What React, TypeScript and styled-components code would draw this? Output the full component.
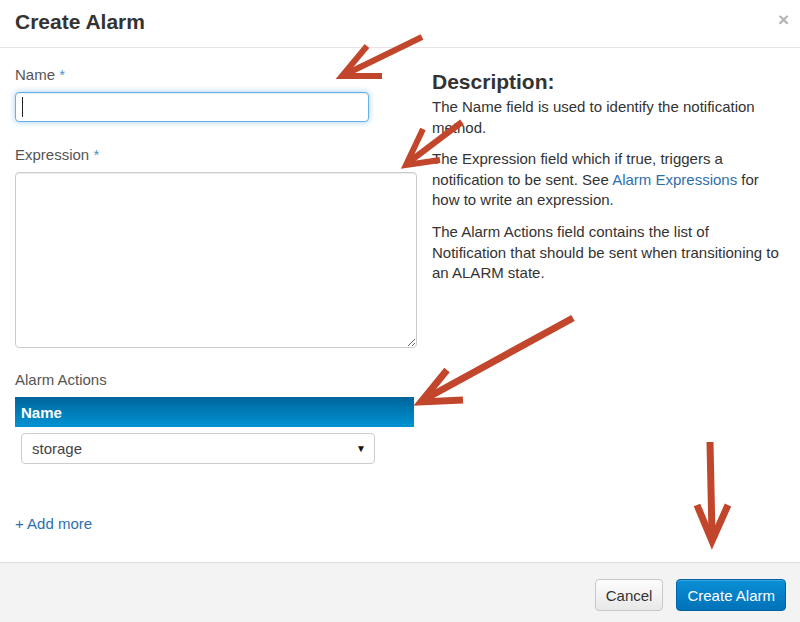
import React from "react";
import styled, { createGlobalStyle } from "styled-components";

const Global = createGlobalStyle`
  html, body { margin: 0; padding: 0; background: #fff; }
  body { font-family: "Liberation Sans", Arial, Helvetica, sans-serif; color: #333; }
  * { box-sizing: border-box; }
`;

const Modal = styled.div`
  position: relative;
  width: 800px;
  height: 622px;
  display: flex;
  flex-direction: column;
  background: #fff;
  overflow: hidden;
`;

const Header = styled.div`
  height: 48px;
  border-bottom: 1px solid #e5e5e5;
  display: flex;
  align-items: center;
  justify-content: space-between;
  padding: 0 15px 4px 15px;
`;

const Title = styled.h3`
  margin: 0;
  font-size: 21px;
  font-weight: bold;
  color: #333;
`;

const Close = styled.span`
  font-size: 19px;
  font-weight: bold;
  color: #b5b5b5;
  line-height: 1;
  margin-right: -4px;
  margin-top: -4px;
`;

const Body = styled.div`
  flex: 1;
  display: grid;
  grid-template-columns: 402px 1fr;
  column-gap: 15px;
  padding: 17px 15px 0 15px;
`;

const LeftCol = styled.div`
  display: flex;
  flex-direction: column;
`;

const Label = styled.label<{ $mt?: number }>`
  display: block;
  font-size: 15px;
  line-height: 20px;
  color: #555;
  margin-top: ${(p) => p.$mt ?? 0}px;
  margin-bottom: 7px;
`;

const Req = styled.span`
  color: #4b93c9;
`;

const InputWrap = styled.div`
  position: relative;
  width: 354px;
  height: 30px;
`;

const TextInput = styled.input`
  width: 100%;
  height: 100%;
  border: 1px solid #66afe9;
  border-radius: 4px;
  box-shadow: inset 0 1px 1px rgba(0,0,0,.075), 0 0 6px rgba(102,175,233,.6);
  outline: none;
  font: 15px "Liberation Sans", Arial, sans-serif;
  padding: 0 6px;
`;

const Caret = styled.span`
  position: absolute;
  left: 7px;
  top: 5px;
  width: 1px;
  height: 20px;
  background: #222;
`;

const TextArea = styled.textarea`
  display: block;
  width: 402px;
  height: 176px;
  border: 1px solid #ccc;
  border-radius: 4px;
  box-shadow: inset 0 1px 1px rgba(0,0,0,.075);
  resize: both;
  font: 15px "Liberation Sans", Arial, sans-serif;
  margin-bottom: 15px;
`;

const TableHead = styled.div`
  width: 399px;
  height: 30px;
  background: linear-gradient(to bottom, #00659a, #0093d4);
  color: #fff;
  font-weight: bold;
  font-size: 15px;
  display: flex;
  align-items: center;
  padding-left: 6px;
`;

const SelectBox = styled.div`
  margin: 6px 0 0 6px;
  width: 354px;
  height: 31px;
  border: 1px solid #ccc;
  border-radius: 4px;
  display: flex;
  align-items: center;
  justify-content: space-between;
  padding: 0 8px 0 10px;
  font-size: 15px;
  color: #444;
`;

const SelectArrow = styled.span`
  font-size: 10px;
  color: #111;
`;

const AddMore = styled.a`
  margin-top: 50px;
  font-size: 15px;
  line-height: 20px;
  color: #2d6fad;
  text-decoration: none;
`;

const RightCol = styled.div`
  padding-top: 5px;
  font-size: 15px;
  line-height: 20.6px;
  color: #333;
`;

const DescTitle = styled.h4`
  margin: 0 0 3px 0;
  font-size: 21px;
  line-height: 24px;
  font-weight: bold;
  color: #333;
`;

const Para = styled.p`
  margin: 0 0 11px 0;
  width: 352px;
`;

const Link = styled.a`
  color: #2d6fad;
  text-decoration: none;
`;

const Footer = styled.div`
  height: 60px;
  border-top: 1px solid #ddd;
  background: #f3f3f3;
  display: flex;
  justify-content: flex-end;
  align-items: flex-start;
  gap: 13px;
  padding: 16px 14px 0 0;
`;

const Button = styled.button<{ $primary?: boolean }>`
  height: 32px;
  padding: 0 10px;
  border-radius: 4px;
  font: 15px "Liberation Sans", Arial, sans-serif;
  cursor: pointer;
  border: 1px solid ${(p) => (p.$primary ? "#0063a3" : "#c8c8c8")};
  color: ${(p) => (p.$primary ? "#fff" : "#333")};
  background: ${(p) =>
    p.$primary
      ? "linear-gradient(to bottom, #0a8fd6, #0072b8)"
      : "linear-gradient(to bottom, #fdfdfd, #e8e8e8)"};
  box-shadow: inset 0 1px 0 rgba(255,255,255,.2);
`;

const Overlay = styled.svg`
  position: absolute;
  left: 0;
  top: 0;
  width: 800px;
  height: 622px;
  pointer-events: none;
`;

type ArrowSpec = { shaft: number[]; head: number[]; w: number };

const arrows: ArrowSpec[] = [
  { shaft: [422, 37, 346, 74], head: [367, 46, 342, 76, 382, 76], w: 6 },
  { shaft: [462, 122, 409, 162], head: [423, 129, 406, 165, 440, 160], w: 6 },
  { shaft: [573, 318, 425, 399], head: [447, 370, 421, 402, 463, 400], w: 7 },
  { shaft: [710, 442, 712, 535], head: [697, 505, 712, 541, 728, 505], w: 7 },
];

export default function App() {
  return (
    <>
      <Global />
      <Modal>
        <Header>
          <Title>Create Alarm</Title>
          <Close>×</Close>
        </Header>
        <Body>
          <LeftCol>
            <Label>
              Name <Req>*</Req>
            </Label>
            <InputWrap>
              <TextInput type="text" />
              <Caret />
            </InputWrap>
            <Label $mt={23}>
              Expression <Req>*</Req>
            </Label>
            <TextArea />
            <Label $mt={7}>Alarm Actions</Label>
            <TableHead>Name</TableHead>
            <SelectBox>
              <span>storage</span>
              <SelectArrow>▼</SelectArrow>
            </SelectBox>
            <AddMore href="#">+ Add more</AddMore>
          </LeftCol>
          <RightCol>
            <DescTitle>Description:</DescTitle>
            <Para>The Name field is used to identify the notification method.</Para>
            <Para>
              The Expression field which if true, triggers a notification to be sent. See{" "}
              <Link href="#">Alarm Expressions</Link> for how to write an expression.
            </Para>
            <Para>
              The Alarm Actions field contains the list of Notification that should be sent when
              transitioning to an ALARM state.
            </Para>
          </RightCol>
        </Body>
        <Footer>
          <Button>Cancel</Button>
          <Button $primary>Create Alarm</Button>
        </Footer>
        <Overlay viewBox="0 0 800 622">
          {arrows.map((a, i) => (
            <g key={i} stroke="#c2462c" fill="none" strokeWidth={a.w}>
              <line x1={a.shaft[0]} y1={a.shaft[1]} x2={a.shaft[2]} y2={a.shaft[3]} />
              <polyline
                points={`${a.head[0]},${a.head[1]} ${a.head[2]},${a.head[3]} ${a.head[4]},${a.head[5]}`}
                strokeLinejoin="miter"
              />
            </g>
          ))}
        </Overlay>
      </Modal>
    </>
  );
}
